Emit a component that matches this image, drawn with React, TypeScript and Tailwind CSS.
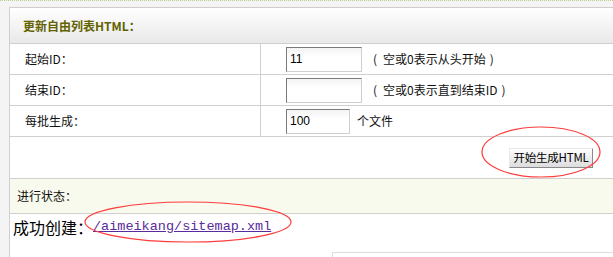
const FONT = '"Noto Sans CJK SC", "Liberation Sans", sans-serif';

const Row = ({ label, children }: { label: string; children: React.ReactNode }) => (
  <div className="flex h-[31px] border-b border-[#d0d0d0]">
    <div className="w-[251px] border-r border-[#d0d0d0] flex items-center pl-[15px]">{label}</div>
    <div className="flex-1 flex items-center pl-[25px] gap-[7px]">{children}</div>
  </div>
);

const Field = ({ value, w }: { value: string; w: string }) => (
  <div
    className={`${w} h-[25px] bg-gradient-to-b from-[#f4f4f4] to-white to-[40%] border border-t-[#7a7a7a] border-l-[#7a7a7a] border-r-[#cfcfcf] border-b-[#cfcfcf] flex items-center pl-[3px] text-[12px] text-black`}
    style={{ fontFamily: '"Liberation Sans", sans-serif' }}
  >
    {value}
  </div>
);

const Hint = ({ text }: { text: string }) => (
  <span className="flex items-center">
    <span className="inline-block w-[12px] text-center">(</span>
    <span className="ml-[2px]">{text}</span>
    <span className="inline-block w-[12px] text-center">)</span>
  </span>
);

export default function App() {
  return (
    <div
      className="relative w-[613px] h-[257px] overflow-hidden bg-[#f4f4f4] text-[12px] text-[#111]"
      style={{ fontFamily: FONT }}
    >
      <div className="h-[1px] border-t border-dotted border-[#b9d28a]" />
      <div className="ml-[9px] mt-[6px] h-[250px] bg-white border-l border-t border-[#cfcfcf]">
        <div className="h-[36px] border-b border-[#cfcfcf] bg-gradient-to-b from-white to-[#e9e9e9] flex items-center pl-[13px] font-bold text-[#626200]">
          更新自由列表HTML：
        </div>
        <Row label="起始ID：">
          <Field value="11" w="w-[76px]" />
          <Hint text="空或0表示从头开始" />
        </Row>
        <Row label="结束ID：">
          <Field value="" w="w-[76px]" />
          <Hint text="空或0表示直到结束ID" />
        </Row>
        <Row label="每批生成：">
          <Field value="100" w="w-[64px]" />
          <span>个文件</span>
        </Row>
        <div className="h-[42px] border-b border-[#cfcfcf] flex items-center justify-end pr-[20px]">
          <button className="h-[20px] w-[84px] flex items-center justify-center whitespace-nowrap bg-gradient-to-b from-white to-[#dcdcdc] border border-t-[#e8e8e8] border-l-[#e8e8e8] border-r-[#8a8a8a] border-b-[#8a8a8a] text-[11.5px] tracking-[-0.2px] text-black">
            开始生成HTML
          </button>
        </div>
        <div className="h-[35px] border-b border-[#cfcfcf] bg-[#f9faee] flex items-center pl-[7px]">
          进行状态：
        </div>
        <div className="flex items-center h-[24px] mt-[1px] pl-[3px] text-[16px] text-black">
          <span>成功创建：</span>
          <a
            href="#"
            className="text-[#5b2a9c] underline text-[13.5px]"
            style={{ fontFamily: '"Liberation Mono", monospace' }}
          >
            /aimeikang/sitemap.xml
          </a>
        </div>
        <div className="ml-[322px] mt-[13px] h-[10px] border-l border-t border-[#dcdcdc]" />
      </div>
      <svg className="absolute left-0 top-0 pointer-events-none" width="613" height="257">
        <ellipse cx="541" cy="152" rx="59" ry="25" fill="none" stroke="#ff3b3b" strokeWidth="1.2" />
        <ellipse cx="188" cy="222" rx="103" ry="20" fill="none" stroke="#ff3b3b" strokeWidth="1.2" />
      </svg>
    </div>
  );
}
